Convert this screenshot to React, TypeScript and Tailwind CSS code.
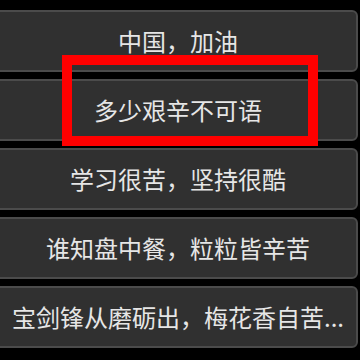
const rows = [
  '中国，加油',
  '多少艰辛不可语',
  '学习很苦，坚持很酷',
  '谁知盘中餐，粒粒皆辛苦',
  '宝剑锋从磨砺出，梅花香自苦...',
];

export default function App() {
  return (
    <div
      className="relative w-[360px] h-[360px] overflow-hidden bg-black"
      style={{ fontFamily: '"Noto Sans CJK SC", "Noto Sans", sans-serif' }}
    >
      <div className="flex flex-col gap-[7px] pt-[10px] -ml-[6px] w-[364px]">
        {rows.map((text, idx) => (
          <button
            key={idx}
            className="h-[62px] w-full rounded-[6px] border-2 border-[#4b4b4b] bg-[#303030] pl-[14px] pr-[10px] text-[24px] leading-none text-[#e6e6e6] whitespace-nowrap"
          >
            {text}
          </button>
        ))}
      </div>

      {/* focus highlight */}
      <div className="absolute left-[62px] top-[55px] w-[256px] h-[91px] border-[10px] border-[#ff0000]" />
    </div>
  );
}
